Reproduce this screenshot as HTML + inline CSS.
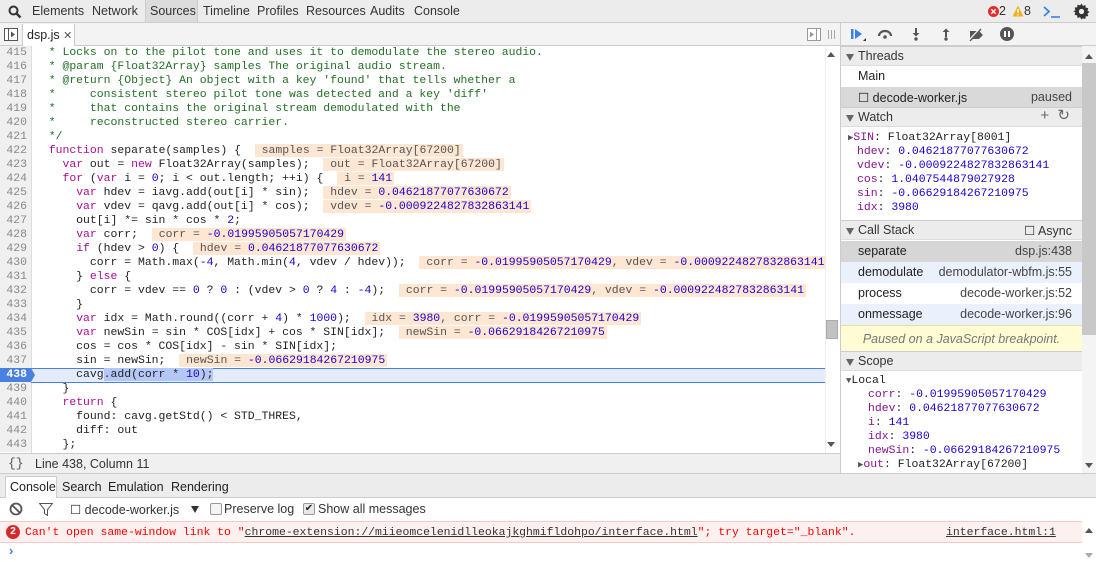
<!DOCTYPE html>
<html><head><meta charset="utf-8"><style>
*{box-sizing:border-box;margin:0;padding:0}
body{width:1096px;height:562px;overflow:hidden;background:#fff;font-family:"Liberation Sans",sans-serif;font-size:12px;color:#222;position:relative}
.a{position:absolute}
.mono{font-family:"Liberation Mono",monospace;font-size:11.45px}
.tb{left:0;top:0;width:1096px;height:23px;background:#ececec;border-bottom:1px solid #ccc}
.tb span{position:absolute;top:4px;font-size:12.5px;color:#333}
.code{left:0;top:46px;width:825px;height:407px;overflow:hidden}
.ln{position:absolute;left:0;width:31px;height:14px;text-align:right;padding-right:4px;color:#888;background:#f0f0f0;line-height:14px}
.cl{position:absolute;left:35px;height:14px;line-height:14px;white-space:pre;color:#222}
.k{color:#aa0d91}.n{color:#1c00cf}.c{color:#236e25}
.iv{background:#fde6d2;color:#555;padding:0 2px 0 7px}
.sh{position:absolute;left:841px;width:241px;height:20px;background:#ececec;border-top:1px solid #ccc;border-bottom:1px solid #ddd;font-size:12.5px;padding:2px 0 0 17px;color:#333}
.sh:before{content:"";position:absolute;left:5px;top:7px;border-left:4.5px solid transparent;border-right:4.5px solid transparent;border-top:7px solid #666}
.row{position:absolute;left:841px;width:241px;height:21px;font-size:12.5px;padding:3px 10px 0 17px;color:#222}
.row b{font-weight:normal;float:right;color:#444}
.w{position:absolute;left:857px;font-family:"Liberation Mono",monospace;font-size:11.45px;line-height:14px;white-space:pre}
.p{color:#881391}
</style></head><body>
<div class="a tb">
<svg class="a" style="left:8px;top:5px" width="14" height="14"><circle cx="5.5" cy="5.5" r="4" stroke="#333" stroke-width="2" fill="none"/><line x1="8.5" y1="8.5" x2="12.5" y2="12.5" stroke="#333" stroke-width="2.4"/></svg>
<span style="left:32px">Elements</span><span style="left:92px">Network</span>
<div class="a" style="left:145px;top:0;width:53px;height:22px;background:#dcdcdc;border-left:1px solid #ccc;border-right:1px solid #ccc"></div>
<span style="left:150px">Sources</span><span style="left:203px">Timeline</span><span style="left:257px">Profiles</span><span style="left:306px">Resources</span><span style="left:370px">Audits</span><span style="left:414px">Console</span>
<svg class="a" style="left:988px;top:6px" width="11" height="11"><circle cx="5.5" cy="5.5" r="5.5" fill="#e32c2c"/><path d="M3.3 3.3l4.4 4.4M7.7 3.3l-4.4 4.4" stroke="#fff" stroke-width="1.4"/></svg><span style="left:999px;top:4px">2</span>
<svg class="a" style="left:1012px;top:5px" width="12" height="12"><path d="M6 0.5L11.5 11.5H0.5Z" fill="#f2b01e"/><rect x="5.3" y="4" width="1.4" height="4" fill="#fff"/><rect x="5.3" y="9" width="1.4" height="1.3" fill="#fff"/></svg><span style="left:1024px;top:4px">8</span>
<svg class="a" style="left:1043px;top:5px" width="18" height="14"><path d="M1 2l5 4.5-5 4.5" stroke="#3b82e6" stroke-width="1.8" fill="none"/><line x1="8" y1="12" x2="17" y2="12" stroke="#3b82e6" stroke-width="1.6"/></svg>
<svg class="a" style="left:1073px;top:3px" width="17" height="17" viewBox="0 0 16 16"><path d="M8 0.5l1.3 2.2 2.4-0.8 0.2 2.5 2.5 0.4-0.8 2.4 2 1.3-2 1.4 0.8 2.4-2.5 0.3-0.3 2.5-2.4-0.8L8 15.5 6.6 13.3l-2.4 0.8-0.2-2.5-2.5-0.4 0.8-2.4L0.3 8 2.3 6.7 1.5 4.3 4 4 4.3 1.5l2.4 0.8z" fill="#333"/><circle cx="8" cy="8" r="2.5" fill="#ececec"/></svg>
</div>
<div class="a" style="left:0;top:23px;width:840px;height:23px;background:#f3f3f3;border-bottom:1px solid #ccc"></div>
<svg class="a" style="left:4px;top:28px" width="14" height="13"><rect x="0.5" y="0.5" width="13" height="12" fill="#fff" stroke="#555"/><line x1="4.5" y1="1" x2="4.5" y2="12" stroke="#555"/><path d="M7 3.5l4 3-4 3z" fill="#555"/></svg>
<div class="a" style="left:22px;top:24px;width:53px;height:22px;background:#fff;border-left:1px solid #ccc;border-right:1px solid #ccc"></div>
<span class="a" style="left:27px;top:28px;font-size:12.5px">dsp.js <span style="color:#555;font-size:11px">✕</span></span>
<svg class="a" style="left:807px;top:28px" width="34" height="13"><rect x="0.5" y="0.5" width="13" height="12" fill="#fff" stroke="#999"/><line x1="9.5" y1="1" x2="9.5" y2="12" stroke="#999"/><path d="M3 3.5l4 3-4 3z" fill="#999"/><path d="M21.5 2v9M24.5 2v9M27.5 2v9" stroke="#aaa"/></svg>
<div class="a" style="left:840px;top:23px;width:1px;height:450px;background:#ccc"></div>
<div class="a" style="left:841px;top:23px;width:255px;height:23px;background:#f3f3f3;border-bottom:1px solid #ccc"></div>
<svg class="a" style="left:850px;top:27px" width="170" height="16">
<rect x="1" y="2" width="2.5" height="10" fill="#3b82e6"/><path d="M5 2l7 5-7 5z" fill="#3b82e6"/><path d="M13 14l3-3v3z" fill="#333"/>
<path d="M29 9a6 5 0 0 1 12 0" stroke="#555" stroke-width="2.2" fill="none"/><circle cx="35" cy="10" r="1.8" fill="#555"/>
<rect x="65" y="1" width="2" height="6" fill="#555"/><path d="M62.5 6h7l-3.5 3.5z" fill="#555"/><circle cx="66" cy="12" r="1.7" fill="#555"/>
<rect x="95" y="4" width="2" height="6" fill="#555"/><path d="M92.5 5h7L96 1.5z" fill="#555"/><circle cx="96" cy="12" r="1.7" fill="#555"/>
<path d="M120 4h9l4 4-4 4h-9z" fill="#555"/><line x1="119" y1="14" x2="131" y2="1" stroke="#f3f3f3" stroke-width="2.5"/><line x1="120" y1="14" x2="131" y2="2" stroke="#555" stroke-width="1.3"/>
<circle cx="157" cy="7" r="7" fill="#555"/><rect x="154" y="4" width="2" height="6" fill="#fff"/><rect x="158" y="4" width="2" height="6" fill="#fff"/>
</svg>
<div class="a code mono">
<div class="a" style="left:31px;top:0;width:1px;height:407px;background:#ddd"></div>
<div class="a" style="left:0;top:322px;width:825px;height:15px;background:#e4ebfc;border-top:1px solid #4a80e0;border-bottom:1px solid #4a80e0"></div>
<div id="lines"></div>
</div>
<div class="a" style="left:825px;top:46px;width:14px;height:407px;background:#fff;border-left:1px solid #eee"></div>
<div class="a" style="left:826px;top:320px;width:12px;height:19px;background:#c1c1c1;border:1px solid #aaa"></div>
<div class="a" style="left:827px;top:52px;border-left:4px solid transparent;border-right:4px solid transparent;border-bottom:5px solid #555"></div>
<div class="a" style="left:827px;top:442px;border-left:4px solid transparent;border-right:4px solid transparent;border-top:5px solid #555"></div>
<div class="a" style="left:0;top:453px;width:840px;height:21px;background:#f0f0f0;border-top:1px solid #ccc"></div>
<span class="a" style="left:8px;top:456px;font-size:13px;color:#555;font-family:'Liberation Mono',monospace">{}</span>
<span class="a" style="left:35px;top:457px;font-size:12.5px;color:#333">Line 438, Column 11</span>
<div class="sh" style="top:46px">Threads</div>
<div class="row" style="top:66px">Main</div>
<div class="row" style="top:87px;background:#d9d9d9">☐ decode-worker.js<b>paused</b></div>
<div class="sh" style="top:107px">Watch<span style="position:absolute;right:12px;top:0;color:#666;font-size:15px;line-height:16px">+&nbsp;&nbsp;↻</span></div>
<div class="w" style="top:131px;left:848px"><span style="color:#555;font-size:9px">▶</span><span class="p">SIN</span>: Float32Array[8001]</div>
<div class="w" style="top:145px"><span class="p">hdev</span>: <span class="n">0.04621877077630672</span></div>
<div class="w" style="top:159px"><span class="p">vdev</span>: <span class="n">-0.0009224827832863141</span></div>
<div class="w" style="top:173px"><span class="p">cos</span>: <span class="n">1.0407544879027928</span></div>
<div class="w" style="top:187px"><span class="p">sin</span>: <span class="n">-0.06629184267210975</span></div>
<div class="w" style="top:201px"><span class="p">idx</span>: <span class="n">3980</span></div>
<div class="sh" style="top:220px">Call Stack<span style="position:absolute;right:10px;top:2px;color:#333">☐ Async</span></div>
<div class="row" style="top:241px;background:#d6d6d6">separate<b>dsp.js:438</b></div>
<div class="row" style="top:262px;background:#eaf1fc">demodulate<b>demodulator-wbfm.js:55</b></div>
<div class="row" style="top:283px">process<b>decode-worker.js:52</b></div>
<div class="row" style="top:304px;background:#eaf1fc">onmessage<b>decode-worker.js:96</b></div>
<div class="a" style="left:841px;top:325px;width:241px;height:27px;background:#fffcd4;border-top:1px solid #e6e0a0;color:#777;font-style:italic;font-size:12.5px;text-align:center;padding-top:6px">Paused on a JavaScript breakpoint.</div>
<div class="sh" style="top:351px">Scope</div>
<div class="w" style="top:374px;left:846px"><span style="color:#555;font-size:9px">▼</span>Local</div>
<div class="w" style="top:388px;left:868px"><span class="p">corr</span>: <span class="n">-0.01995905057170429</span></div>
<div class="w" style="top:402px;left:868px"><span class="p">hdev</span>: <span class="n">0.04621877077630672</span></div>
<div class="w" style="top:416px;left:868px"><span class="p">i</span>: <span class="n">141</span></div>
<div class="w" style="top:430px;left:868px"><span class="p">idx</span>: <span class="n">3980</span></div>
<div class="w" style="top:444px;left:868px"><span class="p">newSin</span>: <span class="n">-0.06629184267210975</span></div>
<div class="w" style="top:458px;left:858px"><span style="color:#555;font-size:9px">▶</span><span class="p">out</span>: Float32Array[67200]</div>
<div class="a" style="left:1082px;top:46px;width:14px;height:427px;background:#f4f4f4"></div>
<div class="a" style="left:1082px;top:63px;width:14px;height:272px;background:#c8c8c8"></div>
<div class="a" style="left:1085px;top:54px;border-left:4px solid transparent;border-right:4px solid transparent;border-bottom:5px solid #555"></div>
<div class="a" style="left:1085px;top:463px;border-left:4px solid transparent;border-right:4px solid transparent;border-top:5px solid #555"></div>
<div class="a" style="left:0;top:473px;width:1096px;height:25px;background:#ececec;border-top:1px solid #ccc;border-bottom:1px solid #ccc"></div>
<div class="a" style="left:5px;top:476px;width:52px;height:22px;background:#fff;border:1px solid #ccc;border-bottom:none"></div>
<span class="a" style="left:10px;top:480px;font-size:12.5px">Console</span>
<span class="a" style="left:62px;top:480px;font-size:12.5px">Search</span>
<span class="a" style="left:108px;top:480px;font-size:12.5px">Emulation</span>
<span class="a" style="left:171px;top:480px;font-size:12.5px">Rendering</span>
<svg class="a" style="left:9px;top:502px" width="14" height="14"><circle cx="7" cy="7" r="5.5" stroke="#555" stroke-width="1.8" fill="none"/><line x1="3" y1="3" x2="11" y2="11" stroke="#555" stroke-width="1.8"/></svg>
<svg class="a" style="left:39px;top:503px" width="14" height="13"><path d="M0.5 0.5h13l-5 6v6l-3-2v-4z" fill="none" stroke="#555"/></svg>
<span class="a" style="left:70px;top:502px;font-size:12.5px;color:#333">☐ decode-worker.js</span>
<div class="a" style="left:191px;top:506px;border-left:4px solid transparent;border-right:4px solid transparent;border-top:7px solid #333"></div>
<div class="a" style="left:210px;top:503px;width:12px;height:12px;border:1px solid #999;border-radius:2px;background:#f4f4f4"></div>
<span class="a" style="left:224px;top:502px;font-size:12.5px;color:#333">Preserve log</span>
<div class="a" style="left:303px;top:503px;width:12px;height:12px;border:1px solid #999;border-radius:2px;background:#e8e8e8;font-size:10px;line-height:10px;text-align:center">✔</div>
<span class="a" style="left:318px;top:502px;font-size:12.5px;color:#333">Show all messages</span>
<div class="a" style="left:0;top:521px;width:1082px;height:22px;background:#fff0f0;border-top:1px solid #f5c8c8;border-bottom:1px solid #f5c8c8"></div>
<div class="a" style="left:6px;top:525px;width:14px;height:14px;border-radius:7px;background:#d52a2a;color:#fff;font-size:10px;font-weight:bold;text-align:center;line-height:14px">2</div>
<div class="a mono" style="left:25px;top:526px;color:#f00;white-space:pre">Can't open same-window link to "<span style="color:#333;text-decoration:underline">chrome-extension://miieomcelenidlleokajkghmifldohpo/interface.html</span>"; try target="_blank".</div>
<div class="a mono" style="left:946px;top:526px;color:#333;text-decoration:underline">interface.html:1</div>
<div class="a" style="left:1085px;top:528px;border-left:4px solid transparent;border-right:4px solid transparent;border-bottom:5px solid #555"></div>
<div class="a" style="left:1085px;top:553px;border-left:4px solid transparent;border-right:4px solid transparent;border-top:5px solid #aaa"></div>
<span class="a" style="left:9px;top:543px;color:#3b82e6;font-weight:bold;font-size:13px">›</span>
<script>
var L=[
'<span class="c">  * Locks on to the pilot tone and uses it to demodulate the stereo audio.</span>',
'<span class="c">  * @param {Float32Array} samples The original audio stream.</span>',
'<span class="c">  * @return {Object} An object with a key \'found\' that tells whether a</span>',
'<span class="c">  *     consistent stereo pilot tone was detected and a key \'diff\'</span>',
'<span class="c">  *     that contains the original stream demodulated with the</span>',
'<span class="c">  *     reconstructed stereo carrier.</span>',
'<span class="c">  */</span>',
'  <span class="k">function</span> separate(samples) {  <span class="iv">samples = Float32Array[67200]</span>',
'    <span class="k">var</span> out = <span class="k">new</span> Float32Array(samples);  <span class="iv">out = Float32Array[67200]</span>',
'    <span class="k">for</span> (<span class="k">var</span> i = <span class="n">0</span>; i &lt; out.length; ++i) {  <span class="iv">i = <span class="n">141</span></span>',
'      <span class="k">var</span> hdev = iavg.add(out[i] * sin);  <span class="iv">hdev = <span class="n">0.04621877077630672</span></span>',
'      <span class="k">var</span> vdev = qavg.add(out[i] * cos);  <span class="iv">vdev = <span class="n">-0.0009224827832863141</span></span>',
'      out[i] *= sin * cos * <span class="n">2</span>;',
'      <span class="k">var</span> corr;  <span class="iv">corr = <span class="n">-0.01995905057170429</span></span>',
'      <span class="k">if</span> (hdev &gt; <span class="n">0</span>) {  <span class="iv">hdev = <span class="n">0.04621877077630672</span></span>',
'        corr = Math.max(<span class="n">-4</span>, Math.min(<span class="n">4</span>, vdev / hdev));  <span class="iv">corr = <span class="n">-0.01995905057170429</span>, vdev = <span class="n">-0.0009224827832863141</span></span>',
'      } <span class="k">else</span> {',
'        corr = vdev == <span class="n">0</span> ? <span class="n">0</span> : (vdev &gt; <span class="n">0</span> ? <span class="n">4</span> : <span class="n">-4</span>);  <span class="iv">corr = <span class="n">-0.01995905057170429</span>, vdev = <span class="n">-0.0009224827832863141</span></span>',
'      }',
'      <span class="k">var</span> idx = Math.round((corr + <span class="n">4</span>) * <span class="n">1000</span>);  <span class="iv">idx = <span class="n">3980</span>, corr = <span class="n">-0.01995905057170429</span></span>',
'      <span class="k">var</span> newSin = sin * COS[idx] + cos * SIN[idx];  <span class="iv">newSin = <span class="n">-0.06629184267210975</span></span>',
'      cos = cos * COS[idx] - sin * SIN[idx];',
'      sin = newSin;  <span class="iv">newSin = <span class="n">-0.06629184267210975</span></span>',
'      cavg<span style="background:#b4c8f7">.add(corr * <span class="n">10</span>);</span>',
'    }',
'    <span class="k">return</span> {',
'      found: cavg.getStd() &lt; STD_THRES,',
'      diff: out',
'    };'];
var h='';
for(var i=0;i<L.length;i++){var n=415+i,t=i*14;
var st=n==438?'background:#4a80e0;color:#fff;font-weight:bold':'';
h+='<div class="ln" style="top:'+t+'px;'+st+'">'+n+'</div><div class="cl" style="top:'+t+'px">'+L[i]+'</div>';}
h+='<div style="position:absolute;left:31px;top:322px;width:0;height:0;border-top:7px solid transparent;border-bottom:7px solid transparent;border-left:4px solid #4a80e0"></div>';
document.getElementById('lines').innerHTML=h;
</script>
</body></html>
